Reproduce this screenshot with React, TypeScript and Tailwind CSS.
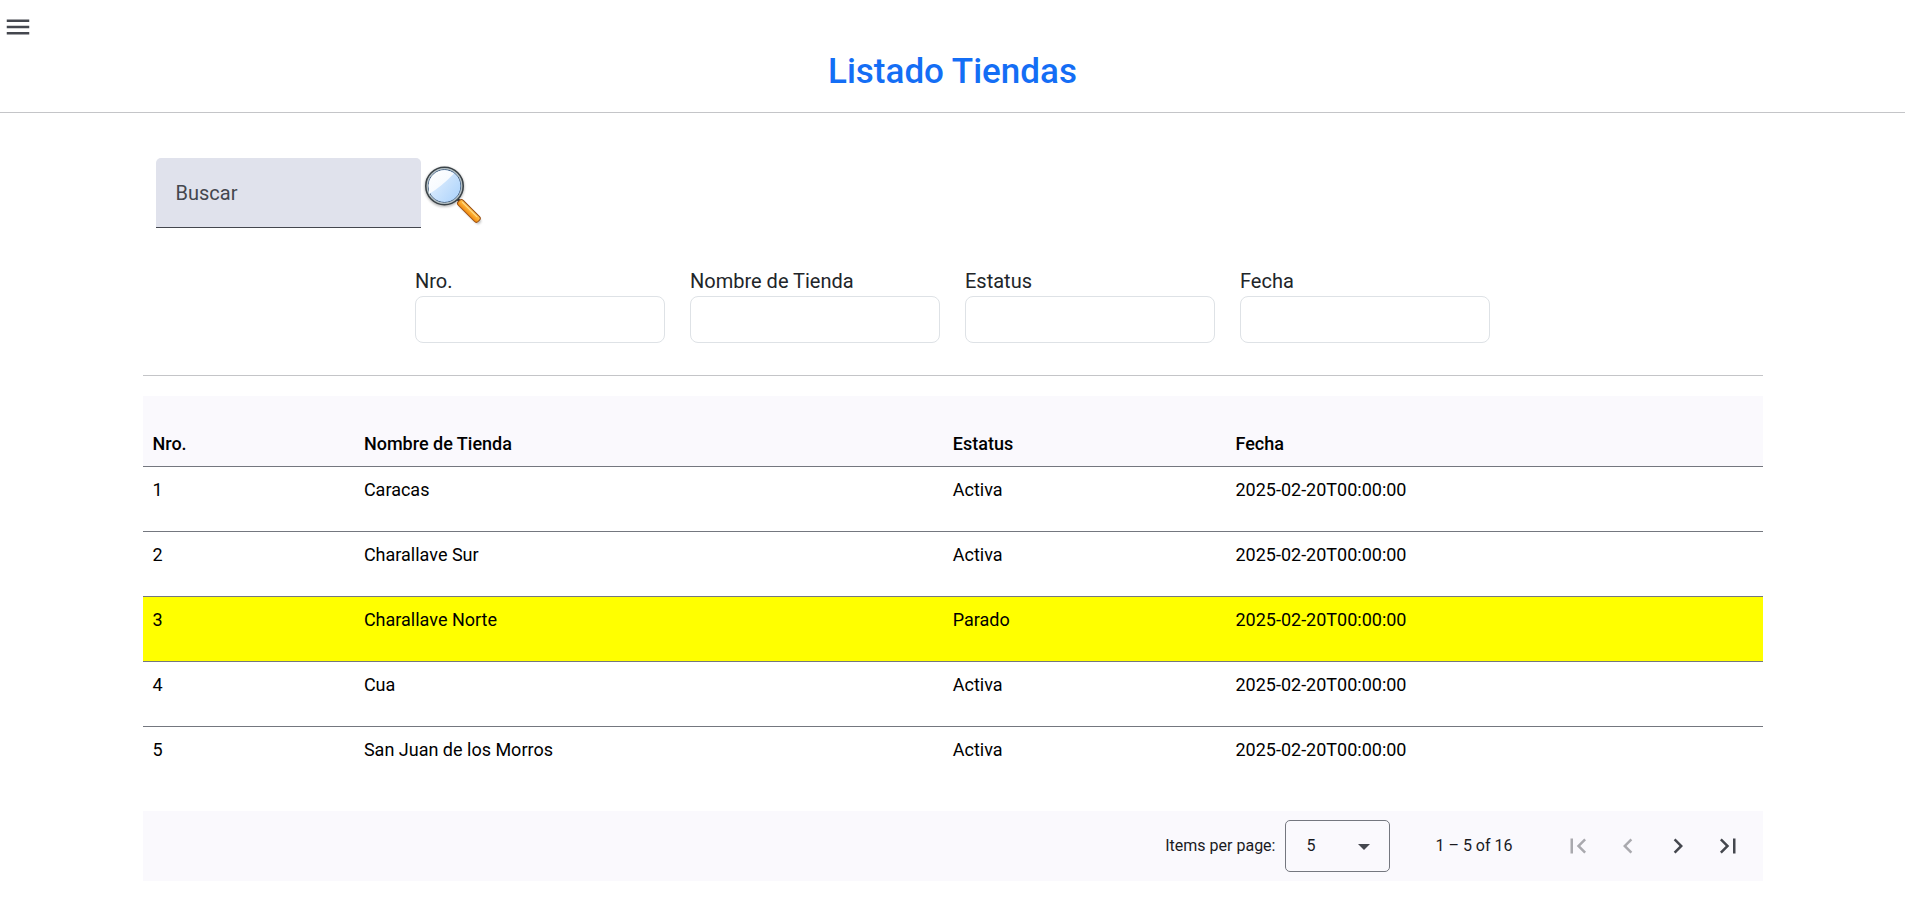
import React, { useState } from "react";

type Tienda = { nro: number; nombre: string; estatus: string; fecha: string };

const tiendas: Tienda[] = [
  { nro: 1, nombre: "Caracas", estatus: "Activa", fecha: "2025-02-20T00:00:00" },
  { nro: 2, nombre: "Charallave Sur", estatus: "Activa", fecha: "2025-02-20T00:00:00" },
  { nro: 3, nombre: "Charallave Norte", estatus: "Parado", fecha: "2025-02-20T00:00:00" },
  { nro: 4, nombre: "Cua", estatus: "Activa", fecha: "2025-02-20T00:00:00" },
  { nro: 5, nombre: "San Juan de los Morros", estatus: "Activa", fecha: "2025-02-20T00:00:00" },
];

const filtros = [
  { id: "nro", label: "Nro." },
  { id: "nombre", label: "Nombre de Tienda" },
  { id: "estatus", label: "Estatus" },
  { id: "fecha", label: "Fecha" },
];

const columnas = [
  { titulo: "Nro.", ancho: "w-[13.05%]" },
  { titulo: "Nombre de Tienda", ancho: "w-[36.35%]" },
  { titulo: "Estatus", ancho: "w-[17.45%]" },
  { titulo: "Fecha", ancho: "w-[33.15%]" },
];

const paginas = [
  { label: "First page", disabled: true, d: "M18.41 16.59L13.82 12l4.59-4.59L17 6l-6 6 6 6zM6 6h2v12H6z" },
  { label: "Previous page", disabled: true, d: "M15.41 7.41L14 6l-6 6 6 6 1.41-1.41L10.83 12z" },
  { label: "Next page", disabled: false, d: "M10 6L8.59 7.41 13.17 12l-4.58 4.59L10 18l6-6z" },
  { label: "Last page", disabled: false, d: "M5.59 7.41L10.18 12l-4.59 4.59L7 18l6-6-6-6zM16 6h2v12h-2z" },
];

function Lupa() {
  return (
    <svg viewBox="0 0 64 64" className="size-16" aria-hidden="true">
      <defs>
        <linearGradient id="cristal" x1="0.9" y1="0.8" x2="0.1" y2="0.2">
          <stop offset="0" stopColor="#b2d6fc" />
          <stop offset="1" stopColor="#e2effd" />
        </linearGradient>
        <linearGradient id="brillo" x1="0" y1="0" x2="0.8" y2="0.9">
          <stop offset="0" stopColor="#ffffff" />
          <stop offset="1" stopColor="#f2f8fe" />
        </linearGradient>
        <linearGradient id="mango" x1="0" y1="0" x2="0" y2="1">
          <stop offset="0" stopColor="#ffc95a" />
          <stop offset="0.5" stopColor="#fdab2d" />
          <stop offset="1" stopColor="#ea8511" />
        </linearGradient>
        <filter id="sombra" x="-20%" y="-20%" width="140%" height="150%">
          <feGaussianBlur stdDeviation="1" />
        </filter>
      </defs>
      <g opacity="0.3" filter="url(#sombra)">
        <circle cx="22.500" cy="24" r="18" fill="none" stroke="#333" strokeWidth="4" />
        <path d="M40 42L56 58" stroke="#333" strokeWidth="6" strokeLinecap="round" />
      </g>
      <path d="M34.500 35L38.500 39" stroke="#20262b" strokeWidth="2.500" />
      <g transform="translate(37 38) rotate(45)">
        <rect x="0" y="-3.500" width="28" height="7" rx="2.500" fill="url(#mango)" stroke="#9b4f12" strokeWidth="1" />
        <path d="M3-1.500H24" stroke="#ffdc8a" strokeWidth="1" />
      </g>
      <circle cx="22.500" cy="23" r="18.500" fill="#b5c3ca" stroke="#3a4247" strokeWidth="2" />
      <circle cx="22.500" cy="23" r="16.500" fill="url(#cristal)" stroke="#2f4d73" strokeWidth="1" />
      <circle cx="22.500" cy="23" r="17.300" fill="none" stroke="#b3bfc4" strokeWidth="1.300" />
      <path d="M7 26.500A15.800 15.800 0 0 1 32 10.500Q19 24 7 31Z" fill="url(#brillo)" />
    </svg>
  );
}

export default function App() {
  const [busqueda, setBusqueda] = useState("");
  const [porPagina, setPorPagina] = useState("5");

  return (
    <div className="bg-white font-[Roboto,sans-serif] text-black">
      <header className="border-b border-[#c4c5c8] pb-5 pt-3">
        <button type="button" aria-label="Menú" className="ml-[3px] block size-[30px] text-[#44474e]">
          <svg viewBox="0 0 24 24" className="size-full" fill="currentColor" aria-hidden="true">
            <path d="M3 18h18v-2H3v2zm0-5h18v-2H3v2zm0-7v2h18V6H3z" />
          </svg>
        </button>
        <h1 className="mt-2 pt-[2px] text-center text-[35px] font-medium leading-10 text-[#146ef5]">Listado Tiendas</h1>
      </header>

      <main className="mx-auto w-full max-w-[1620px] pt-[45px]">
        <form role="search" className="flex items-center pl-[13px]" onSubmit={(e) => e.preventDefault()}>
          <input
            type="search"
            aria-label="Buscar"
            placeholder="Buscar"
            value={busqueda}
            onChange={(e) => setBusqueda(e.target.value)}
            className="h-[70px] w-[265px] rounded-t-[5px] border-b border-[#44474e] bg-[#e0e2ec] px-5 text-xl text-[#1a1b1f] outline-none placeholder:text-[#44474e] placeholder:opacity-100"
          />
          <button type="submit" aria-label="Buscar tienda" className="pl-px pt-1">
            <Lupa />
          </button>
        </form>

        <div className="mt-[38px] flex flex-wrap justify-center gap-[25px]">
          {filtros.map((f) => (
            <div key={f.id} className="flex w-[250px] flex-col">
              <label htmlFor={f.id} className="text-xl leading-[30px] text-[#212529]">
                {f.label}
              </label>
              <input id={f.id} type="text" className="h-[47px] rounded-lg border border-[#dee2e6] bg-white px-3 text-xl outline-none" />
            </div>
          ))}
        </div>

        <hr className="mb-5 mt-8 border-[#c4c5c8]" />

        <table className="w-full table-fixed border-separate border-spacing-0 text-left text-lg leading-[26px]">
          <thead>
            <tr className="h-[71px] bg-[#faf9fd]">
              {columnas.map((c) => (
                <th key={c.titulo} scope="col" className={`${c.ancho} border-b border-[#74777f] px-[10px] pb-[9px] align-bottom font-medium`}>
                  {c.titulo}
                </th>
              ))}
            </tr>
          </thead>
          <tbody>
            {tiendas.map((t) => (
              <tr key={t.nro} className={`group h-[65px] align-top ${t.estatus === "Parado" ? "bg-[#ffff00]" : ""}`}>
                {[t.nro, t.nombre, t.estatus, t.fecha].map((valor, i) => (
                  <td key={i} className="border-b border-[#74777f] px-[10px] pt-[10px] group-last:border-b-0">
                    {valor}
                  </td>
                ))}
              </tr>
            ))}
          </tbody>
        </table>

        <div className="mt-[19px] flex h-[70px] items-center justify-end bg-[#faf9fd] pr-[10px] text-base text-[#1a1b1f]">
          <label htmlFor="por-pagina">Items per page:</label>
          <div className="relative ml-[10px]">
            <select
              id="por-pagina"
              value={porPagina}
              onChange={(e) => setPorPagina(e.target.value)}
              className="block h-[52px] w-[105px] appearance-none rounded-[5px] border border-[#74777f] bg-transparent pl-5 pr-10 outline-none"
            >
              <option>5</option>
              <option>10</option>
              <option>20</option>
            </select>
            <svg viewBox="0 0 12 6" className="pointer-events-none absolute right-5 top-6 h-[6px] w-3 text-[#44474e]" fill="currentColor" aria-hidden="true">
              <path d="M0 0h12L6 6z" />
            </svg>
          </div>
          <span className="ml-[45px] mr-10">1 – 5 of 16</span>
          <nav aria-label="Paginación" className="flex">
            {paginas.map((p) => (
              <button
                key={p.label}
                type="button"
                aria-label={p.label}
                disabled={p.disabled}
                className="flex size-[50px] items-center justify-center text-[#44474e] disabled:text-[#a9a9ae]"
              >
                <svg viewBox="0 0 24 24" className="size-[30px]" fill="currentColor" aria-hidden="true">
                  <path d={p.d} />
                </svg>
              </button>
            ))}
          </nav>
        </div>
      </main>
    </div>
  );
}
